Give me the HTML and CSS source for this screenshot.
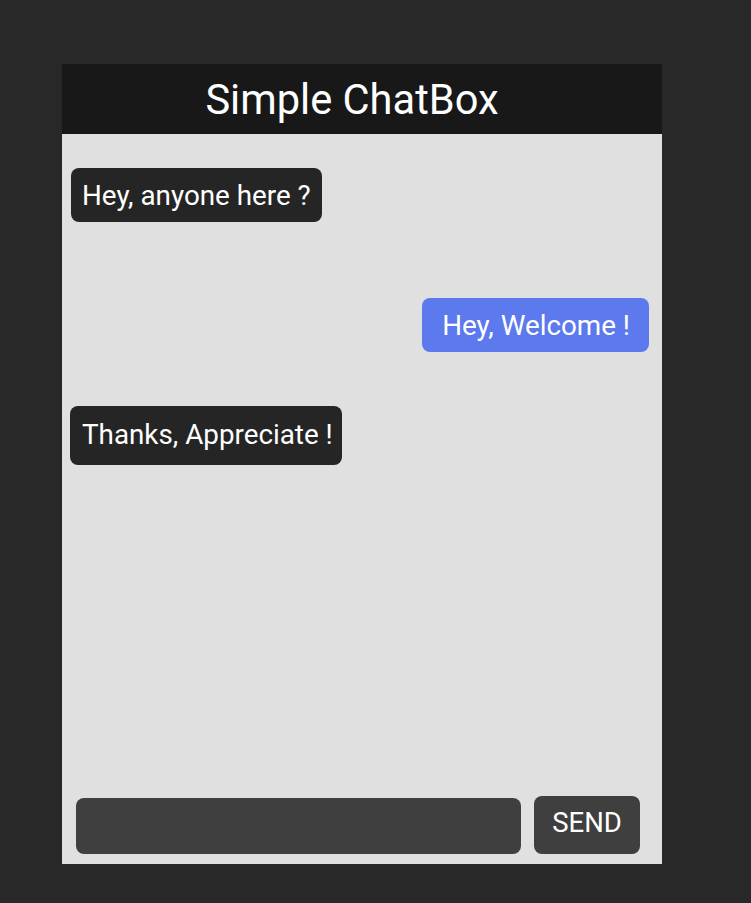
FILE: index.html
```html
<!DOCTYPE html>
<html>
<head>
<meta charset="utf-8">
<link rel="stylesheet" href="styles.css">
</head>
<body>
<div class="chatbox">
  <div class="header">Simple ChatBox</div>
  <div class="messages">
    <div class="msg msg-in msg-1">Hey, anyone here ?</div>
    <div class="msg msg-out msg-2">Hey, Welcome !</div>
    <div class="msg msg-in msg-3">Thanks, Appreciate !</div>
  </div>
  <div class="composer">
    <input class="text-input" type="text">
    <button class="send">SEND</button>
  </div>
</div>
</body>
</html>
```
FILE: styles.css
```css
html, body {
  margin: 0;
  padding: 0;
  background: #282828;
  font-family: Roboto, "Noto Sans", sans-serif;
}
body {
  padding: 64px 0 0 62px;
  height: 903px;
  box-sizing: border-box;
}
.chatbox {
  width: 600px;
  height: 800px;
  background: #e0e0e0;
  display: flex;
  flex-direction: column;
}
.header {
  height: 70px;
  background: #181818;
  color: #ffffff;
  font-size: 41.6px;
  display: flex;
  align-items: center;
  justify-content: center;
  flex-shrink: 0;
  padding-right: 20px;
}
.messages {
  flex: 1;
  display: flex;
  flex-direction: column;
  align-items: flex-start;
  padding: 34px 13px 0 9px;
}
.msg {
  color: #ffffff;
  font-size: 27.8px;
  line-height: 28px;
  border-radius: 8px;
  box-sizing: border-box;
  white-space: nowrap;
}
.msg-in {
  background: #252525;
}
.msg-out {
  background: #5c79ee;
  align-self: flex-end;
}
.msg-1 {
  height: 54px;
  padding: 14px 11px 12px 11px;
}
.msg-2 {
  height: 54px;
  margin-top: 76px;
  padding: 14px 19px 12px 20px;
}
.msg-3 {
  height: 59px;
  margin-top: 54px;
  margin-left: -1px;
  padding: 15px 9px 16px 12px;
}
.composer {
  display: flex;
  align-items: flex-end;
  padding: 0 22px 10px 14px;
  gap: 13px;
}
.text-input {
  flex: 1;
  height: 56px;
  border: none;
  border-radius: 8px;
  background: #3f3f3f;
  color: #fff;
  outline: none;
  margin: 0;
  padding: 0 12px;
  font-size: 20px;
  font-family: Roboto, sans-serif;
}
.send {
  width: 106px;
  height: 58px;
  border: none;
  border-radius: 8px;
  background: #3f3f3f;
  color: #ffffff;
  font-family: Roboto, sans-serif;
  font-size: 27.5px;
  padding: 0 0 6px 0;
  margin: 0;
}
```
